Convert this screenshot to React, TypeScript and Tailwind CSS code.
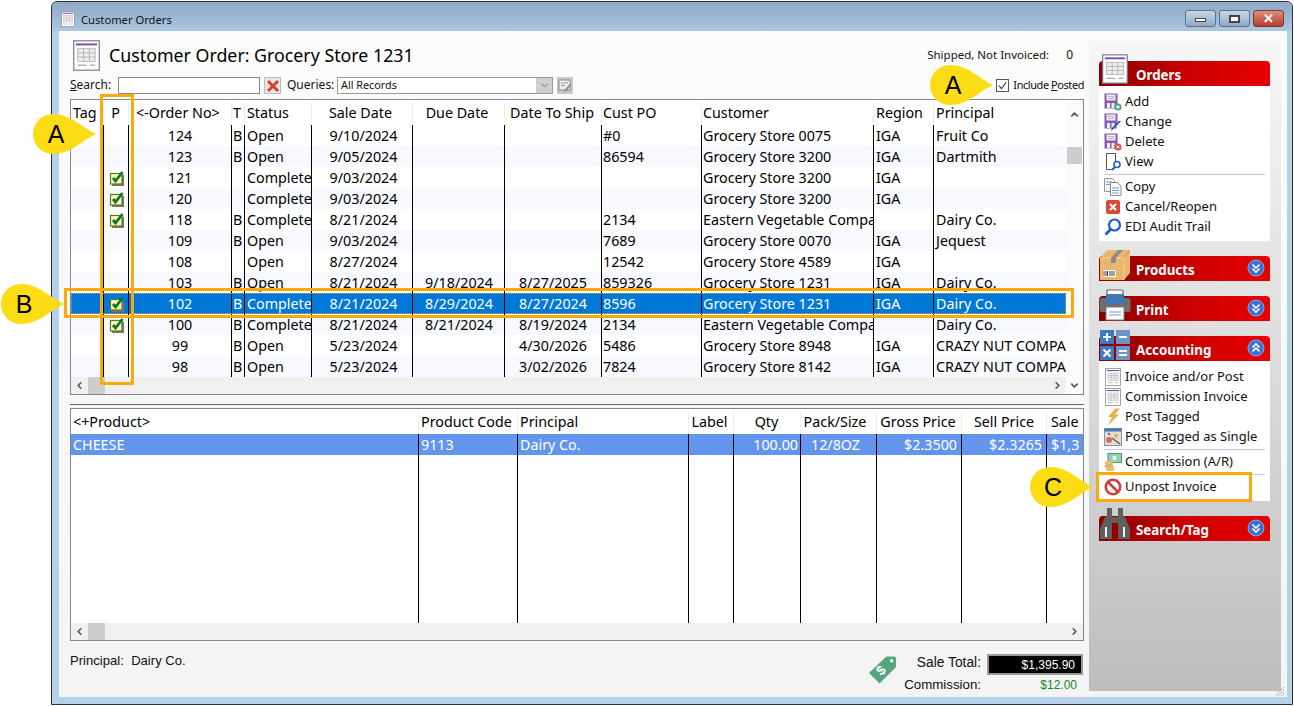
import { ChevronDown, ChevronLeft, ChevronRight, ChevronUp } from "lucide-react"
import type { ReactNode } from "react"

interface OrderRow {
  no: string
  t: string
  status: string
  sale: string
  due: string
  ship: string
  po: string
  customer: string
  region: string
  principal: string
  posted?: boolean
  selected?: boolean
}

const orders: OrderRow[] = [
  { no: "124", t: "B", status: "Open", sale: "9/10/2024", due: "", ship: "", po: "#0", customer: "Grocery Store 0075", region: "IGA", principal: "Fruit Co" },
  { no: "123", t: "B", status: "Open", sale: "9/05/2024", due: "", ship: "", po: "86594", customer: "Grocery Store 3200", region: "IGA", principal: "Dartmith" },
  { no: "121", t: "", status: "Complete", sale: "9/03/2024", due: "", ship: "", po: "", customer: "Grocery Store 3200", region: "IGA", principal: "", posted: true },
  { no: "120", t: "", status: "Complete", sale: "9/03/2024", due: "", ship: "", po: "", customer: "Grocery Store 3200", region: "IGA", principal: "", posted: true },
  { no: "118", t: "B", status: "Complete", sale: "8/21/2024", due: "", ship: "", po: "2134", customer: "Eastern Vegetable Company", region: "", principal: "Dairy Co.", posted: true },
  { no: "109", t: "B", status: "Open", sale: "9/03/2024", due: "", ship: "", po: "7689", customer: "Grocery Store 0070", region: "IGA", principal: "Jequest" },
  { no: "108", t: "", status: "Open", sale: "8/27/2024", due: "", ship: "", po: "12542", customer: "Grocery Store 4589", region: "IGA", principal: "" },
  { no: "103", t: "B", status: "Open", sale: "8/21/2024", due: "9/18/2024", ship: "8/27/2025", po: "859326", customer: "Grocery Store 1231", region: "IGA", principal: "Dairy Co." },
  { no: "102", t: "B", status: "Complete", sale: "8/21/2024", due: "8/29/2024", ship: "8/27/2024", po: "8596", customer: "Grocery Store 1231", region: "IGA", principal: "Dairy Co.", posted: true, selected: true },
  { no: "100", t: "B", status: "Complete", sale: "8/21/2024", due: "8/21/2024", ship: "8/19/2024", po: "2134", customer: "Eastern Vegetable Company", region: "", principal: "Dairy Co.", posted: true },
  { no: "99", t: "B", status: "Open", sale: "5/23/2024", due: "", ship: "4/30/2026", po: "5486", customer: "Grocery Store 8948", region: "IGA", principal: "CRAZY NUT COMPANY" },
  { no: "98", t: "B", status: "Open", sale: "5/23/2024", due: "", ship: "3/02/2026", po: "7824", customer: "Grocery Store 8142", region: "IGA", principal: "CRAZY NUT COMPANY" },
]

const cell = "shrink-0 overflow-hidden whitespace-nowrap"
const rowLine = "border-l border-black"
const headLine = "border-l border-[#ececec]"

function FormIcon({ className }: { className: string }) {
  return (
    <svg viewBox="0 0 28 32" className={className}>
      <rect x="0.75" y="0.75" width="26.5" height="30.5" fill="#fdfdfd" stroke="#77777f" strokeWidth="1.2" />
      <rect x="3" y="3.5" width="22" height="2" fill="#7b4ea3" />
      <rect x="5" y="9" width="18" height="13" fill="#eeeeee" stroke="#a9a9a9" strokeWidth="0.8" />
      <path d="M5 13.3h18M5 17.6h18M11 9v13M17 9v13" stroke="#a9a9a9" strokeWidth="0.8" />
      <path d="M5 26h9M18 26h5" stroke="#8b8b8b" strokeWidth="1" />
    </svg>
  )
}

function PostedCheck() {
  return (
    <svg viewBox="0 0 16 16" className="ml-[2px] h-4 w-4">
      <rect x="3" y="5" width="12" height="11" fill="#77776a" />
      <rect x="1.500" y="3.500" width="11.500" height="10.500" fill="#fbf9c8" stroke="#5c7a14" strokeWidth="1.200" />
      <path d="M4 8l2.500 3L13.500 2" fill="none" stroke="#0e7a1f" strokeWidth="2.800" />
    </svg>
  )
}

function DiskIcon({ badge }: { badge: "add" | "edit" | "delete" }) {
  return (
    <svg viewBox="0 0 18 18" className="h-[18px] w-[18px]">
      <path d="M0.5 0.5h13v11h-1v4h-12z" fill="#8a5bb5" />
      <rect x="2.5" y="1.5" width="9" height="6" fill="#eeeeee" />
      <path d="M4 3.5h6M4 5.5h6" stroke="#b5b5b5" />
      <rect x="3" y="10" width="3" height="5" fill="#eeeeee" />
      <rect x="7.5" y="10" width="3" height="5" fill="#eeeeee" />
      {badge === "add" && <circle cx="14" cy="14" r="3.6" fill="#4ba67c" />}
      {badge === "add" && <path d="M12 14h4M14 12v4" stroke="#fff" />}
      {badge === "delete" && <circle cx="14" cy="14" r="3.6" fill="#d9534a" />}
      {badge === "delete" && <path d="M12.6 12.6l2.8 2.8M15.4 12.6l-2.8 2.8" stroke="#fff" />}
      {badge === "edit" && <path d="M16.5 8.5l-7.5 7.5-1.5 1.5.7-2.5 7-7z" fill="#2b62b8" stroke="#1c4d9c" strokeWidth="0.6" />}
    </svg>
  )
}

function ViewIcon() {
  return (
    <svg viewBox="0 0 18 18" className="h-[18px] w-[18px]">
      <path d="M2.5 0.5h9v9M2.5 0.5v16h7" fill="#fff" stroke="#555" />
      <circle cx="13" cy="11.5" r="3" fill="#fff" stroke="#1f63c0" strokeWidth="1.6" />
      <path d="M11 14l-3 3" stroke="#1f63c0" strokeWidth="1.8" />
    </svg>
  )
}

function CopyIcon() {
  return (
    <svg viewBox="0 0 18 18" className="h-[18px] w-[18px]">
      <path d="M0.5 0.5h8l2 2v11h-10z" fill="#f4f4f4" stroke="#9a9a9a" />
      <path d="M2 4h6M2 6.5h6" stroke="#6f9fd8" />
      <path d="M6.5 4.5h7l3.5 3.5v9.5h-10.5z" fill="#fff" stroke="#8a8a8a" />
      <path d="M8 10h7M8 12.500h7M8 15h7" stroke="#6f9fd8" />
    </svg>
  )
}

function CancelIcon() {
  return (
    <svg viewBox="0 0 18 18" className="h-[18px] w-[18px]">
      <rect x="2" y="2" width="14" height="14" rx="2" fill="#d64b36" />
      <path d="M6 6l6 6M12 6l-6 6" stroke="#fff" strokeWidth="2" />
    </svg>
  )
}

function AuditIcon() {
  return (
    <svg viewBox="0 0 18 18" className="h-[18px] w-[18px]">
      <circle cx="10.500" cy="7" r="5.500" fill="#fff" stroke="#1f63c0" strokeWidth="2.200" />
      <path d="M6.500 11.500l-5 5" stroke="#1f5fb8" strokeWidth="2.800" />
    </svg>
  )
}

function SmallFormIcon() {
  return <FormIcon className="h-[18px] w-[16px]" />
}

function BoltIcon() {
  return (
    <svg viewBox="0 0 18 18" className="h-[18px] w-[18px]">
      <path d="M11 0.500h5l-5 6h4l-11 11 4-8.500h-4z" fill="#eeb04f" />
    </svg>
  )
}

function WandIcon() {
  return (
    <svg viewBox="0 0 18 18" className="h-[18px] w-[18px]">
      <rect x="0.500" y="0.500" width="17" height="17" fill="#e4ddd2" stroke="#7f93ad" />
      <rect x="0.500" y="0.500" width="17" height="3" fill="#4d78ad" />
      <circle cx="5" cy="12" r="3" fill="#d3705a" />
      <path d="M4 5l2 2M8 10l8 6" stroke="#6b5a4a" strokeWidth="1.500" />
      <path d="M12 5l1 2 2 .5-2 1-1 2-.8-2-2-1 2-.5z" fill="#e8a038" />
    </svg>
  )
}

function MoneyIcon() {
  return (
    <svg viewBox="0 0 18 18" className="h-[18px] w-[18px]">
      <rect x="4" y="0.500" width="13.500" height="9" fill="#8fd0ae" stroke="#4d9c77" />
      <circle cx="10.500" cy="5" r="2.200" fill="#eaf7f0" />
      <ellipse cx="5" cy="10" rx="4.500" ry="2" fill="#e9bd6e" />
      <ellipse cx="5" cy="13" rx="4.500" ry="2" fill="#ddb063" />
      <ellipse cx="6" cy="16" rx="4.500" ry="2" fill="#e9bd6e" />
    </svg>
  )
}

function UnpostIcon() {
  return (
    <svg viewBox="0 0 18 18" className="h-[18px] w-[18px]">
      <circle cx="9" cy="9" r="7.200" fill="#fff" stroke="#cf3d3d" strokeWidth="2.600" />
      <path d="M4 4l10 10" stroke="#cf3d3d" strokeWidth="2.600" />
    </svg>
  )
}

function BoxIcon() {
  return (
    <svg viewBox="0 0 32 32" className="h-8 w-8">
      <path d="M1 9l7-8h23v23l-6 7H1z" fill="#e9b66e" />
      <path d="M1 9h24v22" fill="none" stroke="#f6d8a6" strokeWidth="0.800" />
      <path d="M25 9l6-8" stroke="#cf9a52" />
      <path d="M12 9l7-8h5l-7 8v5h-5z" fill="#8b8b8b" />
      <rect x="4" y="21" width="13" height="7" fill="#fff" />
      <path d="M5 22v5M7 22v5M8.500 22v5M11 22v5M13 22v5M15 22v5" stroke="#444" />
    </svg>
  )
}

function PrinterIcon() {
  return (
    <svg viewBox="0 0 32 32" className="h-8 w-8">
      <rect x="8" y="1" width="16" height="8" rx="1" fill="#fff" stroke="#666" strokeWidth="1.200" />
      <rect x="0.500" y="9" width="31" height="14" rx="2" fill="#6d6d6d" />
      <rect x="7" y="5" width="18" height="10" fill="#3f78b5" />
      <rect x="7" y="18" width="18" height="13" fill="#fff" stroke="#7b7b7b" />
      <path d="M10 23h12M10 26h12" stroke="#6f9fd8" />
    </svg>
  )
}

function CalcIcon() {
  return (
    <svg viewBox="0 0 32 32" className="h-8 w-8">
      <rect x="1" y="1" width="14" height="14" fill="#3d7ac4" />
      <rect x="17" y="1" width="14" height="14" fill="#6d94c4" />
      <rect x="1" y="17" width="14" height="14" fill="#3d7ac4" />
      <rect x="17" y="17" width="14" height="14" fill="#6d94c4" />
      <path d="M4 8h8M8 4v8M20 8h8M4.500 20.500l7 7M11.500 20.500l-7 7M20 22h8M20 26h8" stroke="#fff" strokeWidth="2.200" />
    </svg>
  )
}

function BinocularsIcon() {
  return (
    <svg viewBox="0 0 32 32" className="h-8 w-8">
      <path d="M8 0h5v9h6V0h5v8l2 1 5 12v10H19V15h-6v16H1V21L6 9l2-1z" fill="#5f5f5f" />
      <path d="M7 19v10M25 19v10" stroke="#fff" strokeWidth="1.800" />
    </svg>
  )
}

function RoundChevron({ up }: { up?: boolean }) {
  return (
    <svg viewBox="0 0 18 18" className="h-[18px] w-[18px]">
      <circle cx="9" cy="9" r="8" fill="#3e6fd2" stroke="#8ba9e4" />
      <path d={up ? "M5.500 8.500L9 5l3.500 3.500M5.500 12.500L9 9l3.500 3.500" : "M5.500 5.500L9 9l3.500-3.500M5.500 9.500L9 13l3.500-3.500"} fill="none" stroke="#fff" strokeWidth="1.600" />
    </svg>
  )
}

function SectionHeader({ label, icon, up, iconClass }: { label: string; icon: ReactNode; up?: boolean; iconClass?: string }) {
  return (
    <div className="relative flex h-[25px] items-center rounded-t-[4px] bg-gradient-to-r from-[#8a0000] via-[#c80000] to-[#e80000] pl-[37px]">
      <div className={iconClass ?? "absolute left-0 -top-[7px]"}>{icon}</div>
      <span className="pt-[5px] text-[13.3px] font-bold text-white">{label}</span>
      {up !== undefined && (
        <div className="absolute right-[5px] top-[3px]">
          <RoundChevron up={up} />
        </div>
      )}
    </div>
  )
}

function MenuItem({ icon, label }: { icon: ReactNode; label: string }) {
  return (
    <div className="flex h-5 items-center gap-[3px] pl-1 text-[13px] text-[#111]">
      <span className="flex w-[18px] justify-center">{icon}</span>
      <span>{label}</span>
    </div>
  )
}

function Callout({ letter, className }: { letter: string; className: string }) {
  return (
    <svg viewBox="0 0 63 40" className={`absolute h-10 w-[63px] ${className}`}>
      <path d="M63 20C48 27 38 40 20 40A20 20 0 0 1 20 0C38 0 48 13 63 20Z" fill="#fcdc14" />
      <text x="23" y="29" textAnchor="middle" fontSize="25" fontFamily="Liberation Sans, sans-serif" fill="#000">
        {letter}
      </text>
    </svg>
  )
}

function OrdersTable() {
  return (
    <div className="flex h-[296px] border border-[#828790] bg-white text-[14.3px] text-black">
      <div className="flex w-[995px] flex-col">
        <div className="flex h-[25px] items-center">
          <div className={`${cell} w-[32px] pl-[2px]`}>Tag</div>
          <div className={`${cell} ${headLine} w-[25px] pr-[1px] text-center`}>P</div>
          <div className={`${cell} ${headLine} w-[103px] pl-[7px]`}>{"<-Order No>"}</div>
          <div className={`${cell} ${headLine} w-[13px] pl-[1px]`}>T</div>
          <div className={`${cell} ${headLine} w-[67px] pl-[2px]`}>Status</div>
          <div className={`${cell} ${headLine} w-[101px] pr-[3px] text-center`}>Sale Date</div>
          <div className={`${cell} ${headLine} w-[92px] pr-[3px] text-center`}>Due Date</div>
          <div className={`${cell} ${headLine} w-[97px] pr-[2px] text-center`}>Date To Ship</div>
          <div className={`${cell} ${headLine} w-[100px] pl-[1px]`}>Cust PO</div>
          <div className={`${cell} ${headLine} w-[172px] pl-[1px]`}>Customer</div>
          <div className={`${cell} ${headLine} w-[60px] pl-[2px]`}>Region</div>
          <div className={`${cell} ${headLine} w-[133px] pl-[2px]`}>Principal</div>
        </div>
        {orders.map((o, i) => (
          <div
            key={o.no}
            className={`flex h-[21px] items-stretch leading-[21px] ${
              o.selected ? "bg-[#0078d7] text-white outline-1 -outline-offset-1 outline-dotted outline-[#e0a040]" : i % 2 === 1 ? "bg-[#f7f9fe]" : ""
            }`}
          >
            <div className={`${cell} w-[32px]`} />
            <div className={`${cell} ${rowLine} flex w-[25px] items-center justify-center`}>{o.posted && <PostedCheck />}</div>
            <div className={`${cell} ${rowLine} w-[103px] text-center`}>{o.no}</div>
            <div className={`${cell} ${rowLine} w-[13px] pl-[1px]`}>{o.t}</div>
            <div className={`${cell} ${rowLine} w-[67px] pl-[2px]`}>{o.status}</div>
            <div className={`${cell} ${rowLine} w-[101px] pl-[3px] text-center`}>{o.sale}</div>
            <div className={`${cell} ${rowLine} w-[92px] pl-[1px] text-center`}>{o.due}</div>
            <div className={`${cell} ${rowLine} w-[97px] text-center`}>{o.ship}</div>
            <div className={`${cell} ${rowLine} w-[100px] pl-[1px]`}>{o.po}</div>
            <div className={`${cell} ${rowLine} w-[172px] pl-[1px]`}>{o.customer}</div>
            <div className={`${cell} ${rowLine} w-[60px] pl-[2px]`}>{o.region}</div>
            <div className={`${cell} ${rowLine} w-[133px] pl-[2px]`}>{o.principal}</div>
          </div>
        ))}
        <div className="flex h-[17px] items-center bg-[#f0f0f0]">
          <div className="flex w-[17px] justify-center">
            <ChevronLeft size={11} strokeWidth={3.5} className="text-[#555]" />
          </div>
          <div className="h-full w-[17px] bg-[#cdcdcd]" />
          <div className="ml-auto flex w-[17px] justify-center">
            <ChevronRight size={11} strokeWidth={3.5} className="text-[#555]" />
          </div>
        </div>
      </div>
      <div className="flex w-[17px] flex-col items-center bg-[#fbfbfb]">
        <div className="flex h-[20px] items-end">
          <ChevronUp size={11} strokeWidth={3.5} className="text-[#555]" />
        </div>
        <div className="mt-[27px] h-[17px] w-[15px] bg-[#cdcdcd]" />
        <div className="mt-auto mb-[2px] flex h-[14px] items-center">
          <ChevronDown size={11} strokeWidth={3.5} className="text-[#555]" />
        </div>
      </div>
    </div>
  )
}

function ProductsTable() {
  return (
    <div className="flex h-[233px] flex-col border border-[#828790] bg-white text-[14.3px] text-black">
      <div className="flex h-[25px] items-center">
        <div className={`${cell} w-[347px] pl-[2px]`}>{"<+Product>"}</div>
        <div className={`${cell} ${headLine} w-[99px] pl-[2px]`}>Product Code</div>
        <div className={`${cell} ${headLine} w-[171px] pl-[2px]`}>Principal</div>
        <div className={`${cell} ${headLine} w-[45px] pr-[3px] text-center`}>Label</div>
        <div className={`${cell} ${headLine} w-[67px] pr-[1px] text-center`}>Qty</div>
        <div className={`${cell} ${headLine} w-[76px] pr-[7px] text-center`}>Pack/Size</div>
        <div className={`${cell} ${headLine} w-[85px] pr-[2px] text-center`}>Gross Price</div>
        <div className={`${cell} ${headLine} w-[85px] text-center`}>Sell Price</div>
        <div className={`${cell} ${headLine} w-[37px] pl-[4px]`}>Sale</div>
      </div>
      <div className="flex h-[21px] bg-[#6495ed] leading-[21px] text-white">
        <div className={`${cell} w-[347px] pl-[2px]`}>CHEESE</div>
        <div className={`${cell} ${rowLine} w-[99px] pl-[2px]`}>9113</div>
        <div className={`${cell} ${rowLine} w-[171px] pl-[2px]`}>Dairy Co.</div>
        <div className={`${cell} ${rowLine} w-[45px]`} />
        <div className={`${cell} ${rowLine} w-[67px] pr-[2px] text-right`}>100.00</div>
        <div className={`${cell} ${rowLine} w-[76px] pr-[6px] text-center`}>12/8OZ</div>
        <div className={`${cell} ${rowLine} w-[85px] pr-[4px] text-right`}>$2.3500</div>
        <div className={`${cell} ${rowLine} w-[85px] pr-[4px] text-right`}>$2.3265</div>
        <div className={`${cell} ${rowLine} w-[37px] pl-[4px]`}>
          <div className="w-[29px] overflow-hidden">$1,395.90</div>
        </div>
      </div>
      <div className="flex h-[168px]">
        <div className="w-[347px] shrink-0" />
        <div className={`${rowLine} w-[99px] shrink-0`} />
        <div className={`${rowLine} w-[171px] shrink-0`} />
        <div className={`${rowLine} w-[45px] shrink-0`} />
        <div className={`${rowLine} w-[67px] shrink-0`} />
        <div className={`${rowLine} w-[76px] shrink-0`} />
        <div className={`${rowLine} w-[85px] shrink-0`} />
        <div className={`${rowLine} w-[85px] shrink-0`} />
        <div className={`${rowLine} w-[37px] shrink-0`} />
      </div>
      <div className="flex h-[17px] items-center bg-[#f0f0f0]">
        <div className="flex w-[17px] justify-center">
          <ChevronLeft size={11} strokeWidth={3.5} className="text-[#555]" />
        </div>
        <div className="h-full w-[17px] bg-[#cdcdcd]" />
        <div className="ml-auto flex w-[17px] justify-center">
          <ChevronRight size={11} strokeWidth={3.5} className="text-[#555]" />
        </div>
      </div>
    </div>
  )
}

function SidePanel() {
  return (
    <div className="mt-[10px] flex h-[650px] w-[192px] flex-col bg-gradient-to-b from-[#f6f6f6] via-[#dcdcdc] to-[#bdbdbd] pl-[10px] pr-[11px] pt-[20px]">
      <SectionHeader label="Orders" icon={<FormIcon className="h-[30px] w-[26px]" />} iconClass="absolute left-[3px] -top-[7px]" />
      <div className="flex h-[155px] flex-col bg-white px-[1px] pt-[6px]">
        <MenuItem icon={<DiskIcon badge="add" />} label="Add" />
        <MenuItem icon={<DiskIcon badge="edit" />} label="Change" />
        <MenuItem icon={<DiskIcon badge="delete" />} label="Delete" />
        <MenuItem icon={<ViewIcon />} label="View" />
        <div className="mx-[4px] my-[2px] h-px bg-[#c3c8e4]" />
        <MenuItem icon={<CopyIcon />} label="Copy" />
        <MenuItem icon={<CancelIcon />} label="Cancel/Reopen" />
        <MenuItem icon={<AuditIcon />} label="EDI Audit Trail" />
      </div>
      <div className="mt-[15px]">
        <SectionHeader label="Products" up={false} icon={<BoxIcon />} />
      </div>
      <div className="mt-[15px]">
        <SectionHeader label="Print" up={false} icon={<PrinterIcon />} />
      </div>
      <div className="mt-[15px]">
        <SectionHeader label="Accounting" up icon={<CalcIcon />} />
      </div>
      <div className="flex h-[140px] flex-col bg-white px-[1px] pt-[6px]">
        <MenuItem icon={<SmallFormIcon />} label="Invoice and/or Post" />
        <MenuItem icon={<SmallFormIcon />} label="Commission Invoice" />
        <MenuItem icon={<BoltIcon />} label="Post Tagged" />
        <MenuItem icon={<WandIcon />} label="Post Tagged as Single" />
        <div className="mx-[4px] my-[2px] h-px bg-[#c3c8e4]" />
        <MenuItem icon={<MoneyIcon />} label="Commission (A/R)" />
        <div className="mx-[4px] my-[2px] h-px bg-[#c3c8e4]" />
        <MenuItem icon={<UnpostIcon />} label="Unpost Invoice" />
      </div>
      <div className="mt-[15px]">
        <SectionHeader label="Search/Tag" up={false} icon={<BinocularsIcon />} iconClass="absolute left-0 -top-[8px]" />
      </div>
    </div>
  )
}

export default function App() {
  return (
    <div className="relative h-[706px] w-[1294px] overflow-hidden bg-white pl-[51px] pt-[1px] font-['Noto_Sans',sans-serif]">
      <div className="flex h-[704px] w-[1242px] flex-col rounded-t-[6px] border border-[#26333f] bg-[#b8d1ea]">
        {/* title bar */}
        <div className="flex h-[29px] shrink-0 items-start rounded-t-[6px] bg-gradient-to-b from-[#8ea8c5] to-[#acc7e2] pl-[9px] pr-[8px]">
          <FormIcon className="mt-[9px] h-[16px] w-[14px]" />
          <span className="ml-[6px] mt-[10px] text-[11.2px] text-[#111]">Customer Orders</span>
          <div className="ml-auto mt-[8px] flex items-start gap-[3px]">
            <div className="flex h-[17px] w-[31px] items-center justify-center rounded-[3px] border border-[#5d7488] bg-gradient-to-b from-[#c6d8ea] to-[#8fa9c4]">
              <div className="mt-[3px] h-[4px] w-[11px] border border-[#444] bg-white" />
            </div>
            <div className="flex h-[17px] w-[31px] items-center justify-center rounded-[3px] border border-[#5d7488] bg-gradient-to-b from-[#c6d8ea] to-[#8fa9c4]">
              <div className="h-[8px] w-[11px] border-2 border-[#444] bg-white" />
            </div>
            <div className="flex h-[17px] w-[31px] items-center justify-center rounded-[3px] border border-[#7a3a30] bg-gradient-to-b from-[#e08e7f] to-[#b8392a] text-[13px] font-bold leading-none text-white">
              ✕
            </div>
          </div>
        </div>

        {/* window content */}
        <div className="ml-[7px] mr-[5px] flex h-[666px] bg-gradient-to-b from-[#fcfcfc] to-[#f4f4f4]">
          <div className="flex w-[1030px] flex-col pl-[11px] pr-[5px]">
            <div className="mt-[9px] flex h-[30px] items-center">
              <FormIcon className="ml-[3px] h-[31px] w-[27px]" />
              <span className="ml-[9px] text-[17.8px] text-black">Customer Order: Grocery Store 1231</span>
              <span className="ml-auto text-[11.5px] text-[#111]">Shipped, Not Invoiced:</span>
              <span className="ml-[17px] mr-[11px] text-[12px] text-[#111]">0</span>
            </div>
            <div className="mt-[7px] flex h-[17px] items-center text-[12px] text-[#111]">
              <span className="w-[48px] pb-[2px]">
                <u>S</u>earch:
              </span>
              <div className="h-[17px] w-[142px] border border-[#8a8a8a] bg-white" />
              <div className="ml-[4px] flex h-[17px] w-[17px] items-center justify-center border border-[#bbb] bg-[#e8e8e8]">
                <svg viewBox="0 0 14 14" className="h-[14px] w-[14px]">
                  <path d="M2 2l10 10M12 2L2 12" stroke="#d8432c" strokeWidth="3" />
                </svg>
              </div>
              <span className="ml-[6px] w-[50px] pb-[1px]">Queries:</span>
              <div className="flex h-[17px] w-[216px] items-center border border-[#9a9a9a] bg-white pl-[3px] text-[10.8px]">
                <span>All Records</span>
                <div className="ml-auto flex h-full w-[16px] items-center justify-center bg-[#cfcfcf]">
                  <ChevronDown size={11} strokeWidth={2} className="text-[#666]" />
                </div>
              </div>
              <div className="ml-[4px] flex h-[17px] w-[16px] items-center justify-center bg-[#c8c8c8]">
                <svg viewBox="0 0 14 14" className="h-[14px] w-[14px]">
                  <rect x="1" y="1" width="11" height="10" fill="#eee" stroke="#8a8a8a" />
                  <path d="M3 4h7M3 6.500h4" stroke="#999" />
                  <path d="M13 6l-5 6-2 1 .5-2 5-6z" fill="#8c8c8c" />
                </svg>
              </div>
              <div className="ml-auto flex items-center">
                <div className="flex h-[13px] w-[13px] items-center justify-center border border-[#555] bg-white">
                  <svg viewBox="0 0 12 12" className="h-[11px] w-[11px]">
                    <path d="M2 6l3 3.500L10 2.500" fill="none" stroke="#333" strokeWidth="1.200" />
                  </svg>
                </div>
                <span className="ml-[4px] whitespace-nowrap text-[11px] tracking-[-0.44px]">
                  Include <u>P</u>osted
                </span>
              </div>
            </div>
            <div className="mt-[5px]">
              <OrdersTable />
            </div>
            <div className="mt-[9px] h-[1px] bg-[#666]" />
            <div className="mt-[3px]">
              <ProductsTable />
            </div>
            <div className="flex h-[56px] pr-[1px] font-['Liberation_Sans',sans-serif] text-[12px] text-[#111]">
              <span className="mt-[10px] text-[13.1px]">Principal:&nbsp; Dairy Co.</span>
              <div className="ml-auto mt-[14px]">
                <svg viewBox="0 0 30 30" className="h-[30px] w-[29px]">
                  <path d="M19 1h8q2 0 2 2v9L12 29 1 18z" fill="#56a57f" />
                  <circle cx="24.500" cy="5.500" r="1.800" fill="#fff" />
                  <text x="14" y="20" textAnchor="middle" fontSize="14" fontWeight="700" fill="#fff" transform="rotate(-45 14 16)" fontFamily="Liberation Sans, sans-serif">
                    $
                  </text>
                </svg>
              </div>
              <div className="flex flex-col">
                <div className="mt-[13px] flex h-[21px] items-center">
                  <span className="flex w-[84px] justify-end pb-[3px] text-[13.8px]">Sale Total:</span>
                  <div className="ml-[6px] flex h-[21px] w-[96px] items-center justify-end border-2 border-double border-[#999] bg-black pr-[6px] text-white">
                    $1,395.90
                  </div>
                </div>
                <div className="mt-[1px] flex h-[18px] items-center">
                  <span className="flex w-[84px] justify-end text-[13.3px]">Commission:</span>
                  <span className="ml-[6px] w-[90px] text-right text-[#0a8a2a]">$12.00</span>
                </div>
              </div>
            </div>
          </div>
          <SidePanel />
        </div>
      </div>

      {/* resize grip */}
      <svg viewBox="0 0 12 12" className="absolute left-[1273px] top-[685px] h-3 w-3">
        <path d="M11 2L2 11M11 5l-6 6M11 8l-3 3" stroke="#9a9a9a" strokeWidth="1" strokeDasharray="1.500 1" />
      </svg>

      {/* call-outs drawn over the screenshot */}
      <div className="absolute left-[100px] top-[94px] h-[291px] w-[34px] border-[3px] border-[#f9ab0c]" />
      <div className="absolute left-[64px] top-[288px] h-[30px] w-[1010px] border-[3px] border-[#f9ab0c]" />
      <div className="absolute left-[1096px] top-[472px] h-[30px] w-[156px] border-[3px] border-[#f9ab0c]" />
      <Callout letter="A" className="left-[33px] top-[114px]" />
      <Callout letter="A" className="left-[930px] top-[65px]" />
      <Callout letter="B" className="left-[1px] top-[284px]" />
      <Callout letter="C" className="left-[1030px] top-[467px]" />
    </div>
  )
}
